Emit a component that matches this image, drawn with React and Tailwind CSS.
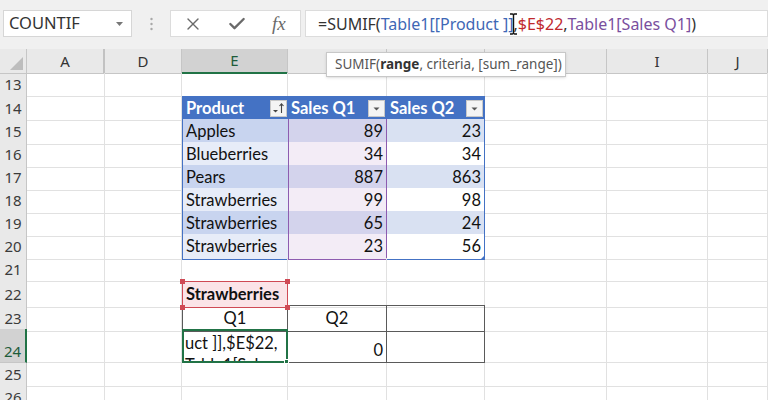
import React from "react";
import { X, Check } from "lucide-react";

const gridCols = "grid grid-cols-[27px_78px_77px_106px_99px_98px_122px_101px_60px]";
const line = "border-r border-b border-[#e1e1e1]";

const data = [
  { n: 15, p: "Apples", q1: 89, q2: 23 },
  { n: 16, p: "Blueberries", q1: 34, q2: 34 },
  { n: 17, p: "Pears", q1: 887, q2: 863 },
  { n: 18, p: "Strawberries", q1: 99, q2: 98 },
  { n: 19, p: "Strawberries", q1: 65, q2: 24 },
  { n: 20, p: "Strawberries", q1: 23, q2: 56 },
];

function RowHead({ n, active }) {
  return (
    <div
      className={
        active
          ? "bg-[#d2d2d2] border-b border-b-[#c6c6c6] border-r-2 border-r-[#217346] flex items-end justify-center pb-[1px] text-[#1e5c3a] font-['Noto_Sans'] text-[15px] leading-[20px]"
          : "bg-[#e9e9e9] border-b border-b-[#d4d4d4] border-r border-r-[#c6c6c6] flex items-center justify-center text-[#3b3b3b] font-['Noto_Sans'] text-[15px]"
      }
    >
      {n}
    </div>
  );
}

function Empty({ n = 6 }) {
  return Array.from({ length: n }).map((_, i) => <div key={i} className={line} />);
}

function FilterBtn({ sort }) {
  return (
    <div className="w-[17px] h-[17px] bg-[#f4f4f4] border border-[#c8c8c8] flex items-center justify-center">
      <svg width="13" height="13" viewBox="0 0 13 13">
        {sort ? (
          <>
            <path d="M1 8 L6 8 L3.5 10.5 Z" fill="#444" />
            <path d="M9.5 11 L9.5 2 M7.5 4 L9.5 1.8 L11.5 4" stroke="#444" strokeWidth="1.1" fill="none" />
          </>
        ) : (
          <path d="M3.5 5.5 L9.5 5.5 L6.5 8.5 Z" fill="#555" />
        )}
      </svg>
    </div>
  );
}

function Corner() {
  return (
    <>
      <span className="absolute -left-[3px] -top-[3px] w-[5px] h-[5px] bg-[#cf4a55] z-10" />
      <span className="absolute -right-[3px] -top-[3px] w-[5px] h-[5px] bg-[#cf4a55] z-10" />
      <span className="absolute -left-[3px] -bottom-[3px] w-[5px] h-[5px] bg-[#cf4a55] z-10" />
      <span className="absolute -right-[3px] -bottom-[3px] w-[5px] h-[5px] bg-[#cf4a55] z-10" />
    </>
  );
}

export default function App() {
  return (
    <div className="w-[768px] h-[400px] overflow-hidden bg-white relative font-['Lato'] text-[16px] text-[#111]">
      {/* ribbon / formula bar */}
      <div className="h-[49px] bg-[#f0f0f0] flex items-start pt-[10px]">
        <div className="ml-[3px] w-[129px] h-[27px] bg-white border border-[#d6d6d6] flex items-center justify-between pl-[5px] pr-[8px]">
          <span className="font-['Noto_Sans'] text-[16.5px] text-[#333]">COUNTIF</span>
          <svg width="7" height="4" viewBox="0 0 7 4">
            <path d="M0 0 L7 0 L3.5 4 Z" fill="#777" />
          </svg>
        </div>
        <div className="w-[38px] h-[27px] flex items-center justify-center">
          <svg width="3" height="14" viewBox="0 0 3 14">
            <circle cx="1.5" cy="2" r="1.2" fill="#a8a8a8" />
            <circle cx="1.5" cy="7" r="1.2" fill="#a8a8a8" />
            <circle cx="1.5" cy="12" r="1.2" fill="#a8a8a8" />
          </svg>
        </div>
        <div className="w-[131px] h-[27px] bg-white border border-[#dcdcdc] flex items-center pl-[12px] gap-[24px] text-[#6a6a6a]">
          <X size={20} strokeWidth={1.6} />
          <Check size={20} strokeWidth={2.8} />
          <span className="font-['Liberation_Serif'] italic text-[19px] leading-none text-[#6a6a6a] ml-[1px]">fx</span>
        </div>
        <div className="ml-[4px] flex-1 h-[27px] bg-white border border-[#dcdcdc] flex items-center pl-[12px] font-['Noto_Sans'] text-[16px] text-[#333] whitespace-nowrap relative">
          <span>=SUMIF(</span>
          <span className="text-[#3e67b5]">Table1[[Product ]]</span>
          <span>,</span>
          <span className="text-[#c0282d]">$E$22</span>
          <span>,</span>
          <span className="text-[#7a4f9e]">Table1[Sales Q1]</span>
          <span>)</span>
          <svg className="absolute left-[203px] top-[2px]" width="9" height="22" viewBox="0 0 9 22">
            <path d="M1 1 L3.5 1 Q4.5 1 4.5 3 L4.5 19 Q4.5 21 3.5 21 L1 21 M8 1 L5.5 1 Q4.5 1 4.5 3 M4.5 19 Q4.5 21 5.5 21 L8 21" stroke="#111" strokeWidth="1.4" fill="none" />
          </svg>
        </div>
      </div>

      {/* tooltip */}
      <div className="absolute left-[326px] top-[52px] w-[240px] h-[25px] bg-white border border-[#c8c8c8] shadow-sm z-20 flex items-center pl-[8px] font-['Noto_Sans'] text-[13.5px] text-[#555] whitespace-nowrap">
        SUMIF(<span className="font-bold text-[#333]">range</span>, criteria, [sum_range])
      </div>

      {/* sheet */}
      <div className="font-['Lato'] text-[16.5px]">
        <div className={`${gridCols} h-[24px]`}>
          <div className="bg-[#e9e9e9] border-r border-b border-[#c6c6c6] relative">
            <svg className="absolute right-[3px] bottom-[3px]" width="13" height="13" viewBox="0 0 13 13">
              <path d="M13 0 L13 13 L0 13 Z" fill="#bdbdbd" />
            </svg>
          </div>
          {["A", "D", "E", "F", "G", "H", "I", "J"].map((c) =>
            c === "E" ? (
              <div key={c} className="bg-[#d2d2d2] border-r border-r-[#c6c6c6] border-b-2 border-b-[#217346] flex items-center justify-center font-['Noto_Sans'] text-[15px] text-[#1e5c3a]">
                {c}
              </div>
            ) : (
              <div key={c} className={`bg-[#e9e9e9] border-b border-b-[#c6c6c6] flex items-center justify-center font-['Noto_Sans'] text-[15px] text-[#333] ${c === "A" ? "border-r-2 border-r-[#c2c2c2]" : "border-r border-r-[#c6c6c6]"}`}>
                {["F", "G", "H"].includes(c) ? null : c}
              </div>
            )
          )}
        </div>

        {/* row 13 */}
        <div className={`${gridCols} h-[23px]`}>
          <RowHead n={13} />
          <Empty n={8} />
        </div>

        {/* row 14 table header */}
        <div className={`${gridCols} h-[23px]`}>
          <RowHead n={14} />
          <Empty n={2} />
          <div className="bg-[#4472c4] border-l border-l-[#4472c4] flex items-center justify-between pl-[3px] pr-[1px] text-white font-bold">
            <span>Product</span>
            <FilterBtn sort />
          </div>
          <div className="bg-[#4472c4] flex items-center justify-between pl-[3px] pr-[2px] text-white font-bold">
            <span>Sales Q1</span>
            <FilterBtn />
          </div>
          <div className="bg-[#4472c4] border-r border-r-[#4472c4] flex items-center justify-between pl-[3px] pr-[1px] text-white font-bold">
            <span>Sales Q2</span>
            <FilterBtn />
          </div>
          <Empty n={3} />
        </div>

        {data.map((r, i) => {
          const odd = i % 2 === 0;
          const last = r.n === 20;
          return (
            <div key={r.n} className={`${gridCols} ${last ? "h-[24px]" : "h-[23px]"}`}>
              <RowHead n={r.n} />
              <Empty n={2} />
              <div className={`${odd ? "bg-[#c8d4ef]" : "bg-[#e7ecf8]"} border-l border-l-[#4472c4] border-b ${last ? "border-b-[#4472c4]" : "border-b-[#b7c8e8]"} flex items-center pl-[3px]`}>
                {r.p}
              </div>
              <div className={`${odd ? "bg-[#d3d3ec]" : "bg-[#f3ecf6]"} border-x border-x-[#8d5cb0] border-b ${last ? "border-b-[#8d5cb0]" : "border-b-[#cdc6e6]"} flex items-center justify-end pr-[3px]`}>
                {r.q1}
              </div>
              <div className={`${odd ? "bg-[#d9e1f2]" : "bg-white"} border-r border-r-[#4472c4] border-b ${last ? "border-b-[#4472c4]" : "border-b-[#b7c8e8]"} flex items-center justify-end pr-[3px] relative`}>
                {r.q2}
                {last && (
                  <svg className="absolute -right-[1px] -bottom-[1px]" width="5" height="5" viewBox="0 0 5 5">
                    <path d="M5 0 L5 5 L0 5 Z" fill="#4472c4" />
                  </svg>
                )}
              </div>
              <Empty n={3} />
            </div>
          );
        })}

        {/* row 21 */}
        <div className={`${gridCols} h-[23px]`}>
          <RowHead n={21} />
          <Empty n={8} />
        </div>

        {/* row 22 */}
        <div className={`${gridCols} h-[24px]`}>
          <RowHead n={22} />
          <Empty n={2} />
          <div className="bg-[#fbe4e8] border border-[#cf4a55] relative flex items-center pl-[3px] font-bold">
            Strawberries
            <Corner />
          </div>
          <Empty n={5} />
        </div>

        {/* row 23 */}
        <div className={`${gridCols} h-[24px]`}>
          <RowHead n={23} />
          <Empty n={2} />
          <div className="border-x border-x-[#5a5a5a] border-b border-b-[#5a5a5a] flex items-center justify-center">Q1</div>
          <div className="border-y border-r border-[#5a5a5a] flex items-center justify-center">Q2</div>
          <div className="border-y border-r border-[#5a5a5a]" />
          <Empty n={3} />
        </div>

        {/* row 24 */}
        <div className={`${gridCols} h-[34px] grid-rows-[34px]`}>
          <RowHead n={24} active />
          <Empty n={2} />
          <div className="border-2 border-[#217346] relative">
            <div className="h-[30px] overflow-hidden pl-[1px] pt-[1px] leading-[22px] whitespace-nowrap">
              <div>uct ]],$E$22,</div>
              <div>Table1[Sales</div>
            </div>
            <span className="absolute -right-[3px] -bottom-[3px] w-[5px] h-[5px] bg-[#217346] border border-white z-10" />
          </div>
          <div className="border-b border-r border-[#5a5a5a] flex items-end justify-end pr-[3px] pb-[2px] leading-[20px]">0</div>
          <div className="border-b border-r border-[#5a5a5a]" />
          <Empty n={3} />
        </div>

        {/* rows 25-26 */}
        {[25, 26].map((n) => (
          <div key={n} className={`${gridCols} h-[23px]`}>
            <RowHead n={n} />
            <Empty n={8} />
          </div>
        ))}
      </div>
    </div>
  );
}
